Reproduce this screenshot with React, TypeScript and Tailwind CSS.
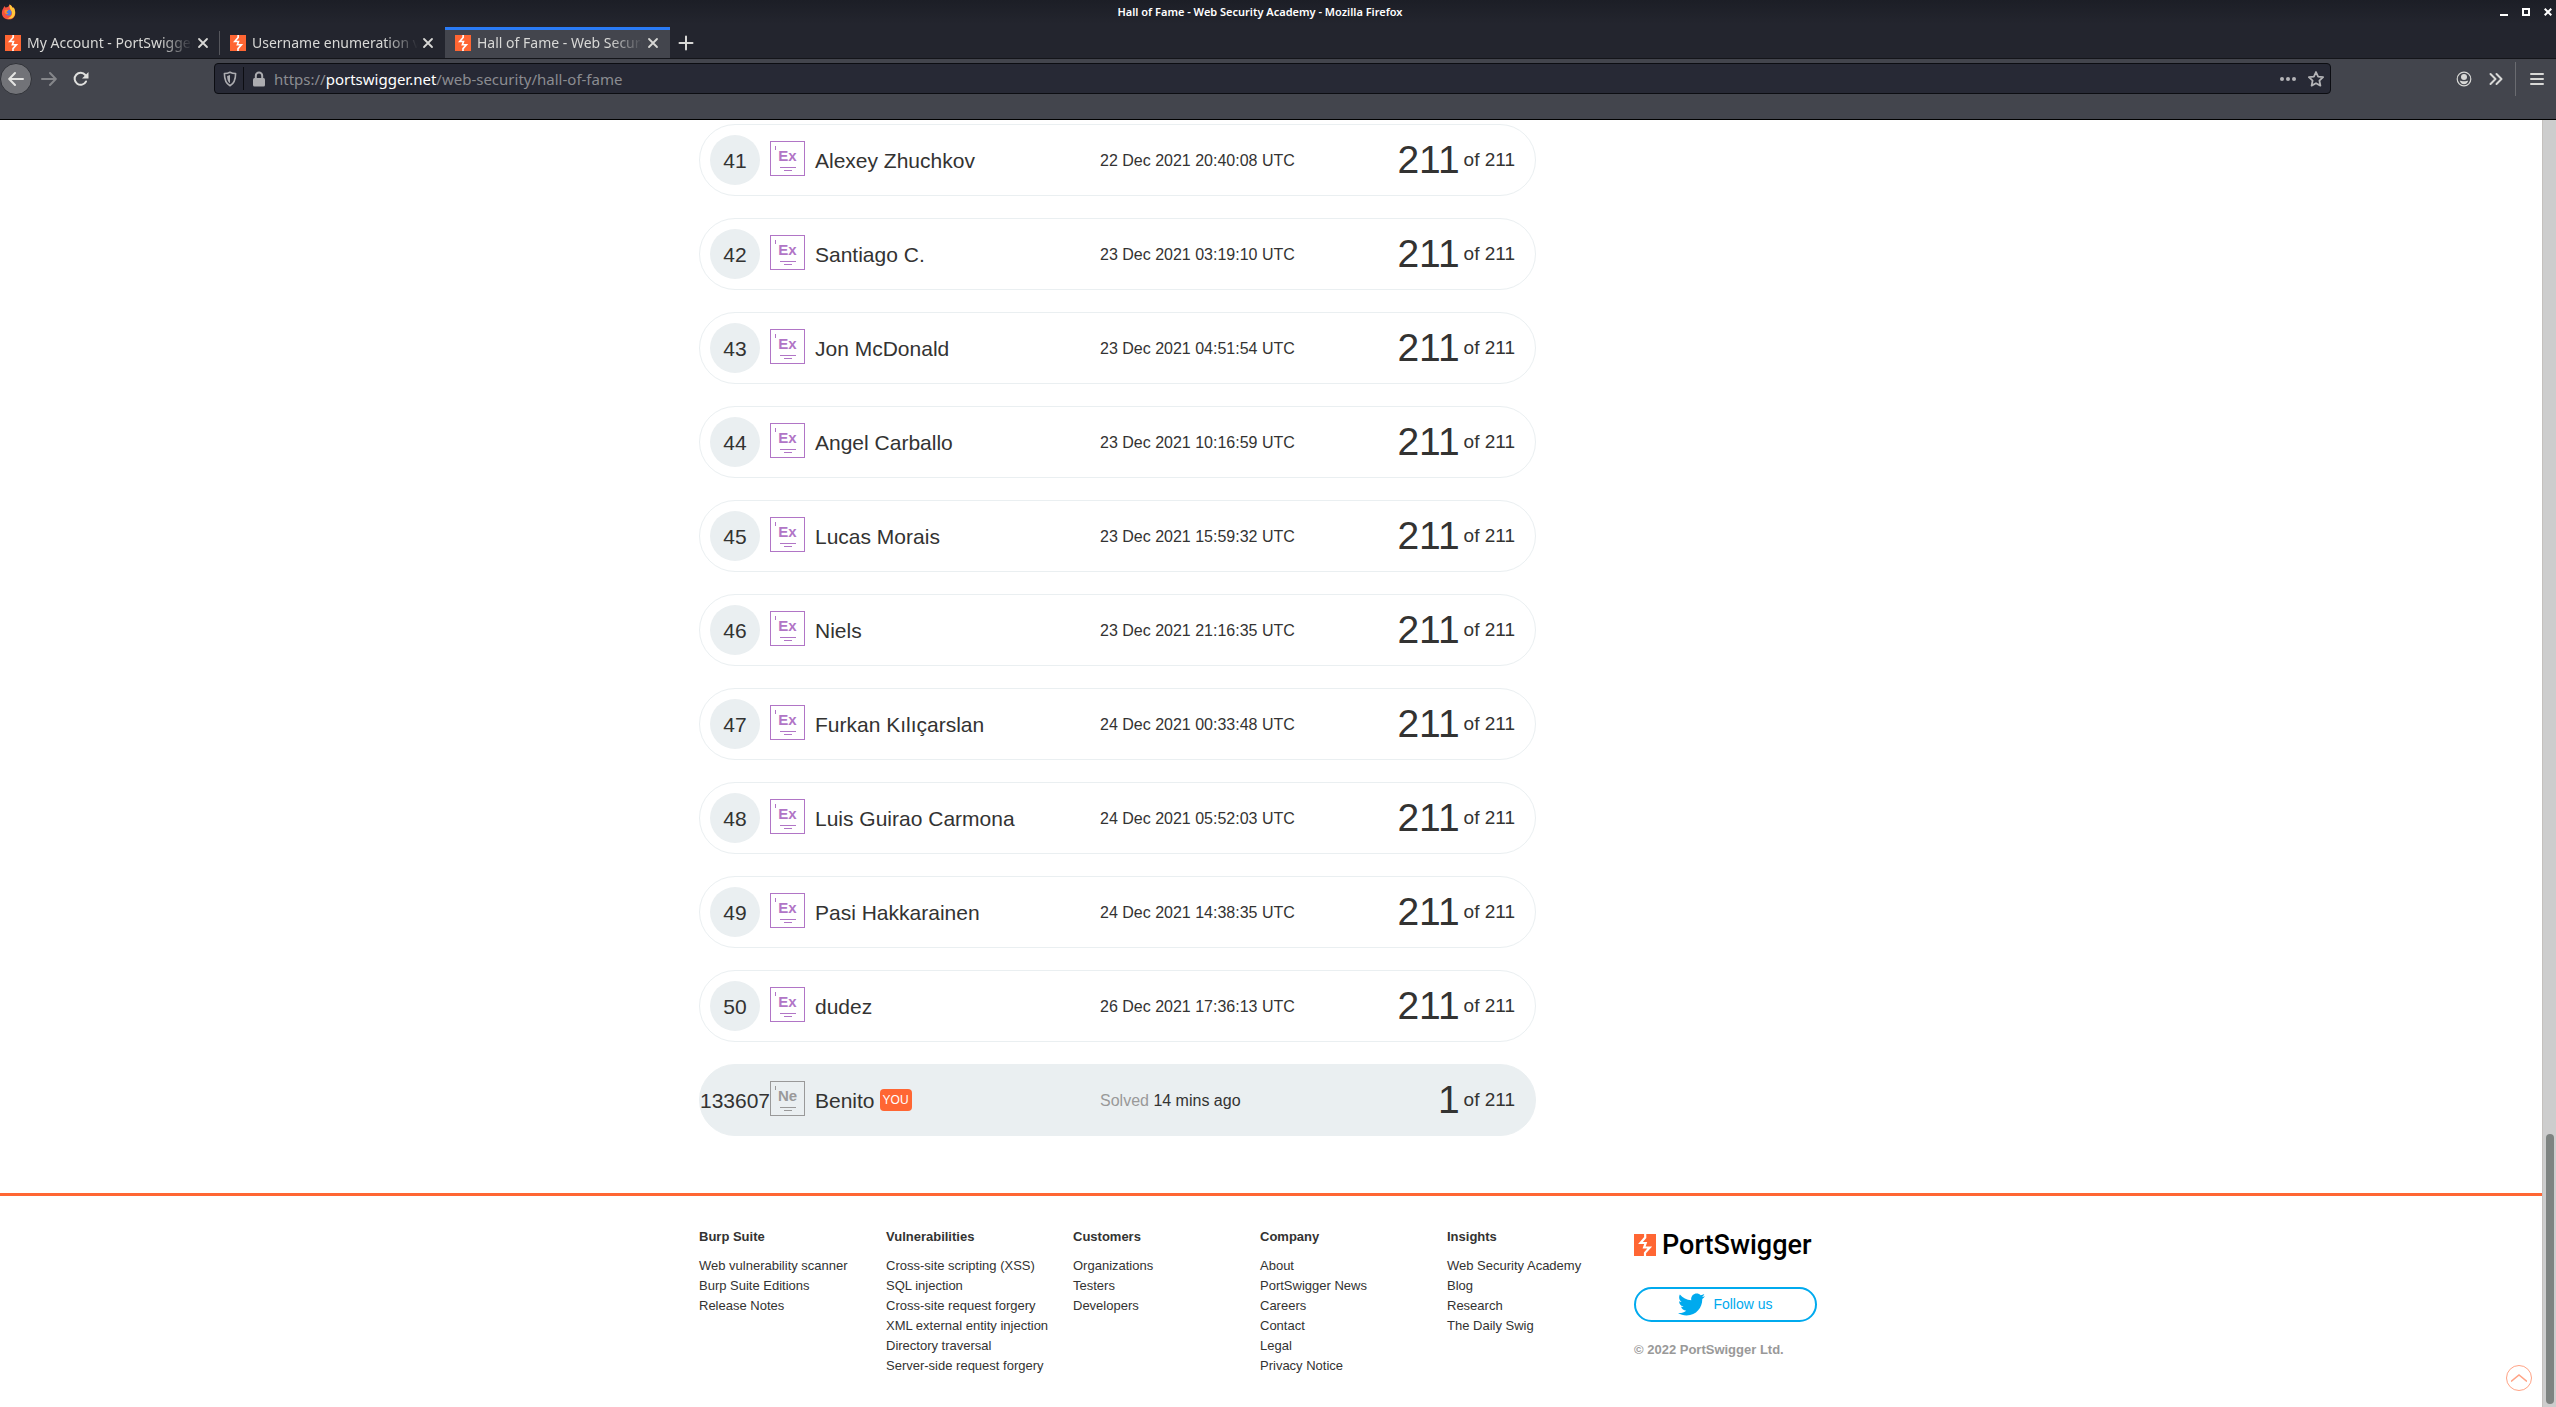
import React from "react";
import { FaTwitter } from "react-icons/fa";

type Entry = {
  rank: number;
  name: string;
  solved: number;
  date?: string;
  ago?: string;
};

const entries: Entry[] = [
  { rank: 41, name: "Alexey Zhuchkov", date: "22 Dec 2021 20:40:08 UTC", solved: 211 },
  { rank: 42, name: "Santiago C.", date: "23 Dec 2021 03:19:10 UTC", solved: 211 },
  { rank: 43, name: "Jon McDonald", date: "23 Dec 2021 04:51:54 UTC", solved: 211 },
  { rank: 44, name: "Angel Carballo", date: "23 Dec 2021 10:16:59 UTC", solved: 211 },
  { rank: 45, name: "Lucas Morais", date: "23 Dec 2021 15:59:32 UTC", solved: 211 },
  { rank: 46, name: "Niels", date: "23 Dec 2021 21:16:35 UTC", solved: 211 },
  { rank: 47, name: "Furkan Kılıçarslan", date: "24 Dec 2021 00:33:48 UTC", solved: 211 },
  { rank: 48, name: "Luis Guirao Carmona", date: "24 Dec 2021 05:52:03 UTC", solved: 211 },
  { rank: 49, name: "Pasi Hakkarainen", date: "24 Dec 2021 14:38:35 UTC", solved: 211 },
  { rank: 50, name: "dudez", date: "26 Dec 2021 17:36:13 UTC", solved: 211 },
  { rank: 133607, name: "Benito", ago: "14 mins ago", solved: 1 },
];

const footerColumns = [
  { title: "Burp Suite", links: ["Web vulnerability scanner", "Burp Suite Editions", "Release Notes"] },
  {
    title: "Vulnerabilities",
    links: [
      "Cross-site scripting (XSS)",
      "SQL injection",
      "Cross-site request forgery",
      "XML external entity injection",
      "Directory traversal",
      "Server-side request forgery",
    ],
  },
  { title: "Customers", links: ["Organizations", "Testers", "Developers"] },
  {
    title: "Company",
    links: ["About", "PortSwigger News", "Careers", "Contact", "Legal", "Privacy Notice"],
  },
  { title: "Insights", links: ["Web Security Academy", "Blog", "Research", "The Daily Swig"] },
];

function BoltMark({ className }: { className: string }) {
  return (
    <svg viewBox="0 0 22 22" className={className} aria-hidden="true">
      <rect width="22" height="22" fill="#ff6633" />
      <path
        d="M11.200 0v3.500L6.500 9h5.200l-1.600 4.500h5.600L11 18.800V22"
        fill="none"
        stroke="#fff"
        strokeWidth="2.200"
      />
    </svg>
  );
}

function FirefoxMark() {
  return (
    <svg viewBox="0 0 16 16" className="size-4" aria-hidden="true">
      <path d="M2.2 4.4 3.4 2l1 1.4L6 3.3 7.5 2.6 8.6.5c1.8 1 2.8 2.3 3.2 3.6l.9-.6c2.8 4.6 2.4 11.9-5 12C2.700 15.500.3 11.500 1 7.500c.2-1.300.6-2.300 1.200-3.100z" fill="#f5523f" />
      <path d="M8.600.5c1.800 1 2.800 2.300 3.200 3.600l.9-.6c2 3.400 2.200 8-1.200 10.500-2 1.100-4 .8-5.600.3 4.400-.6 6.300-4 4.300-7.500C9.400 5 7.900 3.400 8.600.5z" fill="#ffc83a" />
      <circle cx="7.600" cy="8.700" r="2.900" fill="#4a7fe0" />
      <path d="M3.500 6.300c1-.9 2.800-.8 4.100.2-1 .2-1.300.9-2.100 1.300.1 1 1 1.800 2.100 1.700-.9 1-3 1-4-.7z" fill="#ff8a2a" />
    </svg>
  );
}

function Cross() {
  return (
    <svg viewBox="0 0 12 12" className="size-3" fill="none" stroke="#d8d8d6" strokeWidth="1.800" strokeLinecap="round" aria-hidden="true">
      <path d="M2 2l8 8M10 2l-8 8" />
    </svg>
  );
}

function Tab({ title, active = false, first = false }: { title: string; active?: boolean; first?: boolean }) {
  return (
    <div
      role="tab"
      aria-selected={active}
      className={
        active
          ? "flex w-[225px] items-center border-t-3 border-[#2a7bf6] bg-[#43454d] pr-[11px] pb-[3px] pl-2.5"
          : first
            ? "flex w-[220px] items-center pr-[11px] pl-[5px]"
            : "flex w-[225px] items-center pr-[11px] pl-2.5"
      }
    >
      <BoltMark className="size-4 shrink-0" />
      <span className="ml-1.5 min-w-0 flex-1 overflow-hidden [mask-image:linear-gradient(to_right,black_80%,transparent)] text-[14px] leading-5 whitespace-nowrap text-[#d8d8d6]">
        {title}
      </span>
      <button type="button" aria-label="Close tab" className="ml-1 shrink-0">
        <Cross />
      </button>
      {first && <span className="-mr-[11px] ml-2.5 h-6 w-px bg-[#55565c]" />}
    </div>
  );
}

function TitleBar() {
  return (
    <div className="grid h-6 grid-cols-[1fr_auto_1fr] items-center bg-linear-to-b from-[#1c1e26] to-[#23252e]">
      <div className="pl-px">
        <FirefoxMark />
      </div>
      <div className="pr-9 text-[11px] leading-4 font-semibold text-white">
        Hall of Fame - Web Security Academy - Mozilla Firefox
      </div>
      <div className="flex items-center justify-end gap-3.5 pr-1">
        <button type="button" aria-label="Minimize">
          <svg viewBox="0 0 8 8" className="size-2"><path d="M0 6h8v2H0z" fill="#fff" /></svg>
        </button>
        <button type="button" aria-label="Maximize">
          <svg viewBox="0 0 8 8" className="size-2"><path d="M1 1h6v6H1z" fill="none" stroke="#fff" strokeWidth="2" /></svg>
        </button>
        <button type="button" aria-label="Close window">
          <svg viewBox="0 0 8 8" className="size-2"><path d="M.7.7l6.600 6.600M7.300.7.7 7.300" stroke="#fff" strokeWidth="2" /></svg>
        </button>
      </div>
    </div>
  );
}

function Toolbar() {
  return (
    <div className="flex h-[61px] items-start border-b border-black bg-[#43454d] pt-1">
      <div className="flex h-8 w-[214px] shrink-0 items-center">
        <button type="button" aria-label="Back" className="flex size-8 items-center justify-center rounded-full border border-[#303238] bg-[#727378]">
          <svg viewBox="0 0 16 16" className="size-4" fill="none" stroke="#e4e4e2" strokeWidth="2" strokeLinecap="round" strokeLinejoin="round"><path d="M15 8H1.500M7 2 1.200 8 7 14" /></svg>
        </button>
        <button type="button" aria-label="Forward" className="ml-[9px]">
          <svg viewBox="0 0 16 16" className="size-4" fill="none" stroke="#85868a" strokeWidth="2" strokeLinecap="round" strokeLinejoin="round"><path d="M1 8h13.500M9 2l5.800 6L9 14" /></svg>
        </button>
        <button type="button" aria-label="Reload" className="ml-4">
          <svg viewBox="0 0 16 16" className="size-4" fill="none" stroke="#e0e0de" strokeWidth="2"><path d="M13 10.500A6 6 0 1 1 12.300 4" strokeLinecap="round" /><path d="M15.500 1v6.500H9z" fill="#e0e0de" stroke="none" /></svg>
        </button>
      </div>
      <div className="flex h-[31px] min-w-0 flex-1 items-center rounded-[4px] border border-[#0c0d12] bg-[#272935] pr-1.5 pl-2">
        <svg viewBox="0 0 14 16" className="h-4 w-3.5 shrink-0" fill="none" aria-hidden="true">
          <path d="M7 1.200c1.800 1 3.600 1.300 5.600 1.300 0 6-.9 9.700-5.600 12.300C2.300 12.200 1.400 8.500 1.400 2.500c2 0 3.800-.3 5.600-1.300z" stroke="#acacb0" strokeWidth="1.600" strokeLinejoin="round" />
          <path d="M7 4v8.200C4.700 10.500 4.200 8.200 4.100 4.900 5.200 4.800 6.100 4.500 7 4z" fill="#acacb0" />
        </svg>
        <span className="ml-1.5 h-[23px] w-px shrink-0 bg-[#0c0d12]" />
        <svg viewBox="0 0 14 16" className="ml-2 h-4 w-3.5 shrink-0" aria-hidden="true">
          <rect x="1" y="7" width="12" height="8.500" rx="1.500" fill="#acacb0" />
          <path d="M3.800 8V4.800a3.200 3.200 0 0 1 6.400 0V8" fill="none" stroke="#acacb0" strokeWidth="2" />
        </svg>
        <div className="ml-2 flex-1 text-[15px] leading-5 text-[#8b8c91]">
          https://<span className="text-white">portswigger.net</span>/web-security/hall-of-fame
        </div>
        <button type="button" aria-label="Page actions">
          <svg viewBox="0 0 16 16" className="size-4" fill="#b4b4b7"><circle cx="2" cy="8" r="2" /><circle cx="8" cy="8" r="2" /><circle cx="14" cy="8" r="2" /></svg>
        </button>
        <button type="button" aria-label="Bookmark this page" className="ml-3">
          <svg viewBox="0 0 16 16" className="size-4" fill="none" stroke="#b4b4b7" strokeWidth="1.800" strokeLinejoin="round"><path d="M8 1l2.100 4.600 5 .6-3.700 3.400 1 5L8 12.200l-4.400 2.400 1-5L.9 6.200l5-.6z" /></svg>
        </button>
      </div>
      <div className="flex h-8 w-[225px] shrink-0 items-center justify-end pr-3">
        <button type="button" aria-label="Account">
          <svg viewBox="0 0 16 16" className="size-4"><circle cx="8" cy="8" r="6.800" fill="none" stroke="#d8d8d6" strokeWidth="1.200" /><circle cx="8" cy="6" r="3" fill="#d8d8d6" /><path d="M3.800 9.600c1.200 1 7.200 1 8.400 0-.4 2.400-2 3.600-4.200 3.600s-3.800-1.200-4.200-3.600z" fill="#d8d8d6" /></svg>
        </button>
        <button type="button" aria-label="More tools" className="ml-4">
          <svg viewBox="0 0 16 16" className="size-4" fill="none" stroke="#d8d8d6" strokeWidth="2" strokeLinecap="round" strokeLinejoin="round"><path d="M2.500 3l5 5-5 5M8.500 3l5 5-5 5" /></svg>
        </button>
        <span className="ml-[11px] h-[34px] w-px bg-[#6a6b70]" />
        <button type="button" aria-label="Open menu" className="ml-3.5">
          <svg viewBox="0 0 14 14" className="size-3.5" fill="none" stroke="#d8d8d6" strokeWidth="2"><path d="M1 2h12M1 7h12M1 12h12" strokeLinecap="round" /></svg>
        </button>
      </div>
    </div>
  );
}

function LevelBadge({ text, own }: { text: string; own: boolean }) {
  return (
    <div
      className={
        own
          ? "relative mb-4 flex size-[35px] flex-col items-center border border-[#999999] pt-[7px] text-[#999999]"
          : "relative mb-4 flex size-[35px] flex-col items-center border border-[#b175c6] pt-[7px] text-[#b175c6]"
      }
    >
      <span className="absolute top-1 left-1 h-1 w-px bg-current" />
      <span className="text-[15px] leading-[14px] font-bold">{text}</span>
      <span className="mt-1 h-px w-4 bg-current" />
      <span className="mt-0.5 h-px w-2 bg-current" />
    </div>
  );
}

function Row({ entry }: { entry: Entry }) {
  const own = entry.ago !== undefined;
  return (
    <tr
      className={
        own
          ? "flex h-[72px] items-center rounded-full border border-[#eaeff1] bg-[#eaeff1]"
          : "flex h-[72px] items-center rounded-full border border-[#eaeff1]"
      }
    >
      <td className="flex w-[70px] shrink-0 justify-center">
        <span className="flex size-[50px] items-center justify-center rounded-full bg-[#eaeff1] pt-0.5 text-[21px] leading-6">
          {entry.rank}
        </span>
      </td>
      <td className="flex min-w-0 flex-1 items-center pt-3">
        <LevelBadge text={own ? "Ne" : "Ex"} own={own} />
        <span className="mb-2.5 ml-2.5 text-[21px] leading-6">{entry.name}</span>
        {own && (
          <span className="mb-3 ml-[5px] rounded-[4px] bg-[#ff6633] px-[3px] text-[12px] leading-[22px] text-white">YOU</span>
        )}
      </td>
      <td className="w-[297px] shrink-0 pt-px text-base">
        {own ? (
          <>
            <span className="text-[#999999]">Solved</span> {entry.ago}
          </>
        ) : (
          entry.date
        )}
      </td>
      <td className="flex w-[138px] shrink-0 items-center justify-end gap-1 pr-5 text-[19px] whitespace-nowrap">
        <span className="text-[39px] leading-10">{entry.solved}</span>
        <span>of 211</span>
      </td>
    </tr>
  );
}

function Footer() {
  return (
    <footer className="border-t-3 border-[#ff6633]">
      <div className="mx-auto grid w-full max-w-[1144px] grid-cols-[repeat(5,187px)_1fr] pt-[31px] pb-6 text-[13px]">
        {footerColumns.map((column) => (
          <nav key={column.title} aria-label={column.title}>
            <h2 className="leading-5 font-bold">{column.title}</h2>
            <ul className="mt-[9px]">
              {column.links.map((link) => (
                <li key={link} className="leading-5">
                  <a href="#">{link}</a>
                </li>
              ))}
            </ul>
          </nav>
        ))}
        <div>
          <a href="#" className="mt-0.5 flex h-8 items-center gap-1.5 text-black">
            <BoltMark className="size-[22px]" />
            <span className="font-[Roboto] text-[27px] leading-8 font-medium">PortSwigger</span>
          </a>
          <a
            href="#"
            className="mt-[26px] flex h-[35px] w-[183px] items-center justify-center gap-2 rounded-full border-2 border-[#00aaee] text-[14px] text-[#00aaee]"
          >
            <FaTwitter className="size-[27px]" />
            Follow us
          </a>
          <p className="mt-[18px] leading-5 font-bold text-[#999999]">© 2022 PortSwigger Ltd.</p>
        </div>
      </div>
    </footer>
  );
}

export default function App() {
  return (
    <div className="flex min-h-screen flex-col bg-white">
      <header className="font-['Noto_Sans',sans-serif]">
        <TitleBar />
        <div className="flex h-[35px] items-stretch border-b border-[#14151a] bg-[#23252e] pt-[3px]" role="tablist">
          <Tab title="My Account - PortSwigger" first />
          <Tab title="Username enumeration via different responses" />
          <Tab title="Hall of Fame - Web Security Academy" active />
          <button type="button" aria-label="New tab" className="ml-2">
            <svg viewBox="0 0 16 16" className="size-4" stroke="#d8d8d6" strokeWidth="2" strokeLinecap="round"><path d="M8 1.500v13M1.500 8h13" /></svg>
          </button>
        </div>
        <Toolbar />
      </header>
      <div className="flex flex-1 font-['Liberation_Sans',Arial,sans-serif] text-[#333332]">
        <div className="relative flex-1">
          <main className="mx-auto w-full max-w-[1144px] pt-1 pb-[57px]">
            <table className="block w-[837px]">
              <tbody className="flex flex-col gap-[22px]">
                {entries.map((entry) => (
                  <Row key={entry.rank} entry={entry} />
                ))}
              </tbody>
            </table>
          </main>
          <Footer />
          <button
            type="button"
            aria-label="Back to top"
            className="absolute right-2.5 bottom-4 flex size-[26px] items-center justify-center rounded-full border border-[#ffa385]"
          >
            <svg viewBox="0 0 16 8" className="h-2 w-4" fill="none" stroke="#ffa385" strokeWidth="1.500"><path d="M0 7.500 8 1l8 6.500" /></svg>
          </button>
        </div>
        <div className="flex w-3.5 items-end justify-center border-l border-[#c4c0bd] bg-[#cdcdcd] pb-[3px]">
          <div className="h-[270px] w-2 rounded-full bg-[#7e8381]" />
        </div>
      </div>
    </div>
  );
}
